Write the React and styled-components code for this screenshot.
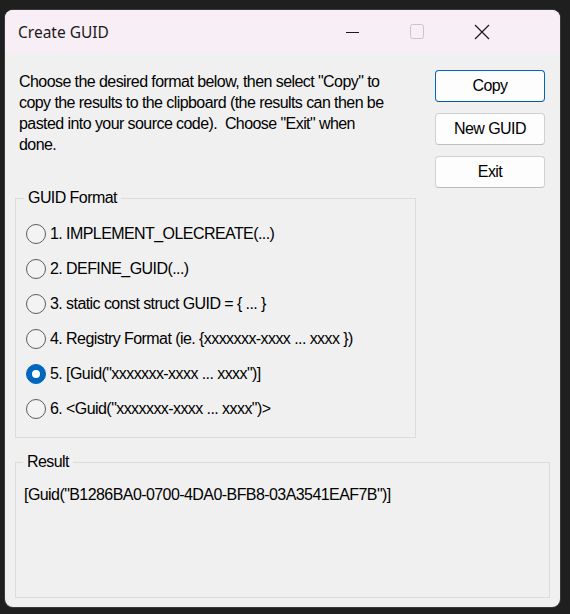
import styled, { createGlobalStyle } from "styled-components";

const Global = createGlobalStyle`
    html, body {
        margin: 0;
        background: #1f1f1f;
    }
`;

const Page = styled.div`
    width: 570px;
    height: 614px;
    box-sizing: border-box;
    padding: 10px 10px 7px 5px;
    background: #1f1f1f;
`;

const Window = styled.div`
    width: 555px;
    height: 597px;
    border-radius: 8px;
    overflow: hidden;
    background: #f0f0f0;
    display: flex;
    flex-direction: column;
    box-shadow: 0 0 0 1px #3a3a3a;
    font-family: "Liberation Sans", Arial, sans-serif;
    color: #000;
`;

const TitleBar = styled.div`
    height: 43px;
    flex: none;
    display: flex;
    align-items: center;
    background: #f8eef5;
    padding-right: 46px;
`;

const Title = styled.div`
    flex: 1;
    padding-left: 13px;
    font-family: "Noto Sans", "Open Sans", sans-serif;
    font-size: 15.5px;
    color: #1a1a1a;
`;

const CaptionButton = styled.div`
    width: 65px;
    height: 43px;
    display: flex;
    align-items: center;
    justify-content: center;
`;

const Body = styled.div`
    flex: 1;
    display: flex;
    flex-direction: column;
    padding: 17px 10px 9px 10px;
    font-size: 16px;
    letter-spacing: -0.57px;
`;

const TopRow = styled.div`
    display: flex;
    justify-content: space-between;
    height: 118px;
`;

const Instructions = styled.p`
    margin: 1px 0 0;
    padding: 0 0 0 4px;
    line-height: 21px;
`;

const ButtonColumn = styled.div`
    display: flex;
    flex-direction: column;
    gap: 11px;
    margin-right: 5px;
`;

const Button = styled.button`
    width: 110px;
    height: 32px;
    box-sizing: border-box;
    border: 1px solid ${p => (p.$primary ? "#0067c0" : "#d0d0d0")};
    border-bottom-color: ${p => (p.$primary ? "#0057a8" : "#bcbcbc")};
    border-radius: 4px;
    background: #fdfdfd;
    font: inherit;
    letter-spacing: inherit;
    color: #000;
    padding: 0;
`;

const Group = styled.fieldset`
    margin: 0;
    padding: ${p => p.$pad};
    border: 1px solid #dcdcdc;
    width: ${p => p.$width};
    box-sizing: border-box;
    min-width: 0;
    ${p => (p.$grow ? "flex: 1; margin-top: 14px;" : "")}
`;

const Legend = styled.legend`
    margin-left: ${p => p.$offset || "8px"};
    padding: 0 4px;
    line-height: 20px;
`;

const RadioRow = styled.label`
    display: flex;
    align-items: center;
    height: 35px;
    gap: 4px;
    padding-left: 10px;
`;

const RadioCircle = styled.span`
    width: 20px;
    height: 20px;
    box-sizing: border-box;
    border-radius: 50%;
    flex: none;
    display: flex;
    align-items: center;
    justify-content: center;
    border: 1px solid ${p => (p.$checked ? "#0067c0" : "#5d5d5d")};
    background: ${p => (p.$checked ? "#0067c0" : "#f3f3f3")};

    &::after {
        content: "";
        width: 8px;
        height: 8px;
        border-radius: 50%;
        background: #fff;
        display: ${p => (p.$checked ? "block" : "none")};
    }
`;

const ResultText = styled.div`
    line-height: 21px;
    padding-left: 8px;
`;

const formats = [
    "1. IMPLEMENT_OLECREATE(...)",
    "2. DEFINE_GUID(...)",
    "3. static const struct GUID = { ... }",
    "4. Registry Format (ie. {xxxxxxx-xxxx ... xxxx })",
    "5. [Guid(\"xxxxxxx-xxxx ... xxxx\")]",
    "6. <Guid(\"xxxxxxx-xxxx ... xxxx\")>",
];

export default function App() {
    const selected = 4;
    return (
        <Page>
            <Global />
            <Window>
                <TitleBar>
                    <Title>Create GUID</Title>
                    <CaptionButton>
                        <svg width="14" height="14" viewBox="0 0 14 14">
                            <line x1="1" y1="7.5" x2="14" y2="7.5" stroke="#1a1a1a" strokeWidth="1" />
                        </svg>
                    </CaptionButton>
                    <CaptionButton>
                        <svg width="14" height="15" viewBox="0 0 14 15">
                            <rect x="0.5" y="0.5" width="13" height="14" rx="2" fill="none" stroke="#c6c6c6" strokeWidth="1" />
                        </svg>
                    </CaptionButton>
                    <CaptionButton>
                        <svg width="16" height="16" viewBox="0 0 16 16">
                            <path d="M1 1 L15 15 M15 1 L1 15" stroke="#1a1a1a" strokeWidth="1.2" />
                        </svg>
                    </CaptionButton>
                </TitleBar>
                <Body>
                    <TopRow>
                        <Instructions>
                            Choose the desired format below, then select "Copy" to<br />
                            copy the results to the clipboard (the results can then be<br />
                            pasted into your source code).&nbsp; Choose "Exit" when<br />
                            done.
                        </Instructions>
                        <ButtonColumn>
                            <Button $primary>Copy</Button>
                            <Button>New GUID</Button>
                            <Button>Exit</Button>
                        </ButtonColumn>
                    </TopRow>
                    <Group $width="401px" $pad="8px 0 11px 0">
                        <Legend>GUID Format</Legend>
                        {formats.map((f, i) => (
                            <RadioRow key={f}>
                                <RadioCircle $checked={i === selected} />
                                {f}
                            </RadioRow>
                        ))}
                    </Group>
                    <Group $width="100%" $pad="12px 0" $grow>
                        <Legend $offset="7px">Result</Legend>
                        <ResultText>[Guid("B1286BA0-0700-4DA0-BFB8-03A3541EAF7B")]</ResultText>
                    </Group>
                </Body>
            </Window>
        </Page>
    );
}
